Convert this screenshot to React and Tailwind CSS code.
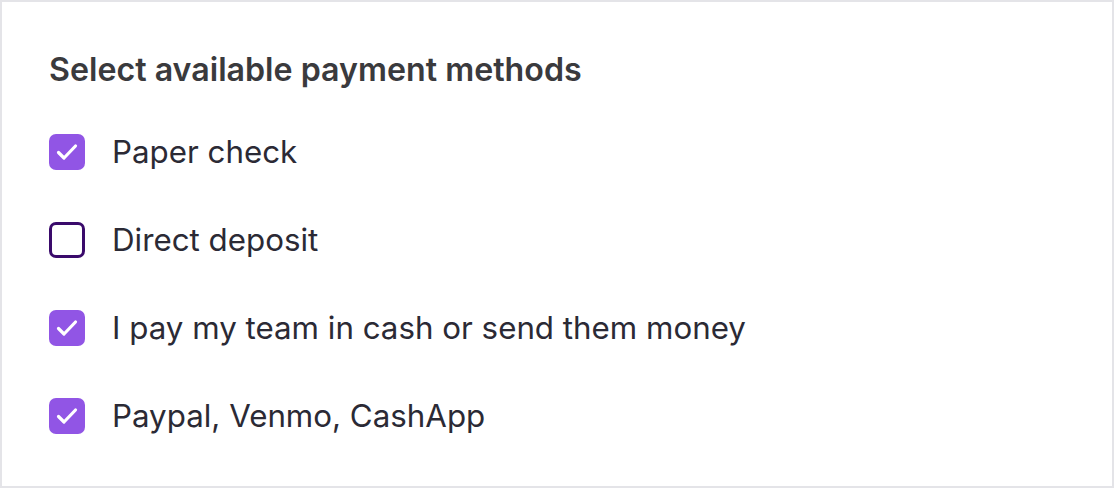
import React, { useState } from 'react';

const methods = [
  { label: 'Paper check', checked: true },
  { label: 'Direct deposit', checked: false },
  { label: 'I pay my team in cash or send them money', checked: true },
  { label: 'Paypal, Venmo, CashApp', checked: true },
];

const Box = ({ checked }) =>
  checked ? (
    <span className="flex h-9 w-9 shrink-0 items-center justify-center rounded-[7px] bg-[#9155e5]">
      <svg width="36" height="36" viewBox="0 0 36 36" fill="none">
        <path d="M9.5 18.5l5.5 5.5L26.5 12" stroke="white" strokeWidth="3.2" strokeLinecap="round" strokeLinejoin="round" />
      </svg>
    </span>
  ) : (
    <span className="block h-9 w-9 shrink-0 rounded-[7px] border-[3px] border-[#3a0a6b] bg-white" />
  );

const App = () => {
  const [items, setItems] = useState(methods);

  const toggle = (i) =>
    setItems(items.map((m, j) => (j === i ? { ...m, checked: !m.checked } : m)));

  return (
    <div className="h-[488px] w-[1114px] border-2 border-[#e4e4e8] bg-white font-['Inter',sans-serif]">
      <div className="pl-[47px] pt-[50px]">
        <h2 className="text-[32.2px] font-semibold leading-[36px] text-[#3a3a3d]">
          Select available payment methods
        </h2>
        <ul className="mt-[46px] flex flex-col gap-[52px]">
          {items.map((m, i) => (
            <li key={m.label}>
              <label className="flex cursor-pointer items-center gap-[27px]" onClick={() => toggle(i)}>
                <Box checked={m.checked} />
                <span className="text-[31.3px] leading-[36px] text-[#2b2a35]">{m.label}</span>
              </label>
            </li>
          ))}
        </ul>
      </div>
    </div>
  );
};

export default App;
